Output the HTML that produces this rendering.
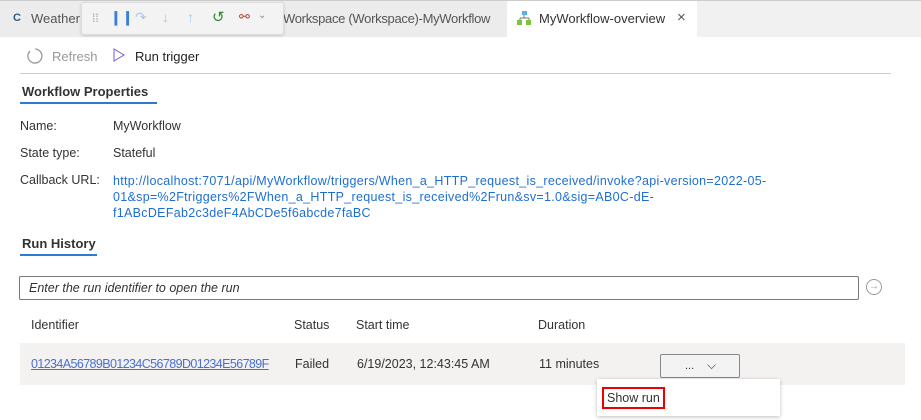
<!DOCTYPE html>
<html><head><style>
*{margin:0;padding:0;box-sizing:border-box}
body{width:921px;height:420px;background:#fff;font-family:"Liberation Sans",sans-serif;font-size:12.5px;color:#333;position:relative;overflow:hidden}
.a{position:absolute;white-space:nowrap}
a{color:#1f6fd1}
</style></head><body>
<div class="a" style="left:0;top:0;width:921px;height:37px;background:#f1f1f1;border-top:1px solid #ccc"></div>
<div class="a" style="left:0;top:1px;width:507px;height:36px;background:#ececec"></div>
<div class="a" style="left:507px;top:1px;width:190px;height:36px;background:#fff"></div>
<div class="a" style="left:13px;top:12px;font-weight:bold;color:#2a5d8a;font-size:11px">C</div>
<div class="a" style="left:31px;top:11px;color:#555;font-size:13px">Weather</div>
<div class="a" style="left:283px;top:11px;color:#555;font-size:13px;letter-spacing:-0.3px">Workspace (Workspace)-MyWorkflow</div>
<svg class="a" style="left:517px;top:11px" width="14" height="14"><rect x="5" y="0" width="5" height="4" fill="#5ab0e8"/><path d="M7 4v3M3 7h9M3 7v3M12 7v3" stroke="#777" fill="none"/><rect x="0" y="9" width="5" height="5" fill="#7cc43a"/><rect x="9" y="9" width="5" height="5" fill="#7cc43a"/></svg>
<div class="a" style="left:539px;top:11px;color:#333;font-size:13px">MyWorkflow-overview</div>
<div class="a" style="left:677px;top:9px;color:#555;font-size:15px">×</div>
<div class="a" style="left:81px;top:2px;width:203px;height:33px;background:#f3f3f3;border:1px solid #ddd;border-radius:3px;box-shadow:0 1px 3px rgba(0,0,0,.15)"></div>
<div class="a" style="left:92px;top:11px;color:#999;font-size:12px">⁞⁞</div>
<div class="a" style="left:110px;top:9px;color:#3b7fd6;font-weight:bold;font-size:14px">❙❙</div>
<div class="a" style="left:135px;top:9px;color:#a8c8ee;font-size:14px">↷</div>
<div class="a" style="left:162px;top:9px;color:#a8c8ee;font-size:14px">↓</div>
<div class="a" style="left:187px;top:9px;color:#a8c8ee;font-size:14px">↑</div>
<div class="a" style="left:212px;top:8px;color:#2d8a2d;font-size:15px">↺</div>
<div class="a" style="left:239px;top:9px;color:#b5442e;font-size:13px">⚯</div>
<div class="a" style="left:258px;top:10px;color:#888;font-size:10px">⌄</div>
<svg class="a" style="left:26px;top:47px" width="18" height="18"><path d="M4 4A7 7 0 1 0 9 2" stroke="#999" fill="none" stroke-width="1.3"/></svg>
<div class="a" style="left:52px;top:49px;color:#999;font-size:13px">Refresh</div>
<svg class="a" style="left:113px;top:48px" width="12" height="14"><path d="M1 1L11 7L1 13Z" stroke="#7a5bd6" fill="none"/></svg>
<div class="a" style="left:135px;top:49px;color:#222;font-size:13px">Run trigger</div>
<div class="a" style="left:20px;top:73px;width:871px;height:1px;background:#ccc"></div>
<div class="a" style="left:22px;top:84px;font-weight:bold;font-size:13px;color:#333">Workflow Properties</div>
<div class="a" style="left:20px;top:102px;width:137px;height:2px;background:#2b7bd6"></div>
<div class="a" style="left:20px;top:119px">Name:</div>
<div class="a" style="left:113px;top:119px">MyWorkflow</div>
<div class="a" style="left:20px;top:146px">State type:</div>
<div class="a" style="left:113px;top:146px">Stateful</div>
<div class="a" style="left:20px;top:173px">Callback URL:</div>
<div class="a" style="left:113px;top:173px;color:#1f6fd1;line-height:16px;letter-spacing:0.3px">http://localhost:7071/api/MyWorkflow/triggers/When_a_HTTP_request_is_received/invoke?api-version=2022-05-<br>01&amp;sp=%2Ftriggers%2FWhen_a_HTTP_request_is_received%2Frun&amp;sv=1.0&amp;sig=AB0C-dE-<br>f1ABcDEFab2c3deF4AbCDe5f6abcde7faBC</div>
<div class="a" style="left:22px;top:236px;font-weight:bold;font-size:13px">Run History</div>
<div class="a" style="left:20px;top:254px;width:77px;height:2px;background:#2b7bd6"></div>
<div class="a" style="left:19px;top:276px;width:840px;height:24px;border:1px solid #777;border-radius:2px"></div>
<div class="a" style="left:29px;top:281px;font-style:italic;color:#333">Enter the run identifier to open the run</div>
<div class="a" style="left:866px;top:279px;width:16px;height:16px;border:1px solid #999;border-radius:50%;color:#999;font-size:10px;text-align:center;line-height:14px">→</div>
<div class="a" style="left:31px;top:318px">Identifier</div>
<div class="a" style="left:294px;top:318px">Status</div>
<div class="a" style="left:356px;top:318px">Start time</div>
<div class="a" style="left:538px;top:318px">Duration</div>
<div class="a" style="left:20px;top:343px;width:885px;height:42px;background:#f3f2f1"></div>
<div class="a" style="left:31px;top:357px;color:#4a6fd1;text-decoration:underline;letter-spacing:-0.6px">01234A56789B01234C56789D01234E56789F</div>
<div class="a" style="left:295px;top:357px">Failed</div>
<div class="a" style="left:357px;top:357px">6/19/2023, 12:43:45 AM</div>
<div class="a" style="left:539px;top:357px">11 minutes</div>
<div class="a" style="left:660px;top:354px;width:80px;height:24px;border:1px solid #888;background:#f3f3f3;border-radius:2px;font-size:11px;color:#333"><span style="position:absolute;left:24px;top:5px">...</span><span style="position:absolute;left:46px;top:3px;font-size:12px">⌵</span></div>
<div class="a" style="left:597px;top:379px;width:183px;height:37px;background:#fff;box-shadow:0 1px 4px rgba(0,0,0,.25)"></div>
<div class="a" style="left:602px;top:387px;width:63px;height:22px;border:2px solid #e00;padding:2px 0 0 3px">Show run</div>
</body></html>
